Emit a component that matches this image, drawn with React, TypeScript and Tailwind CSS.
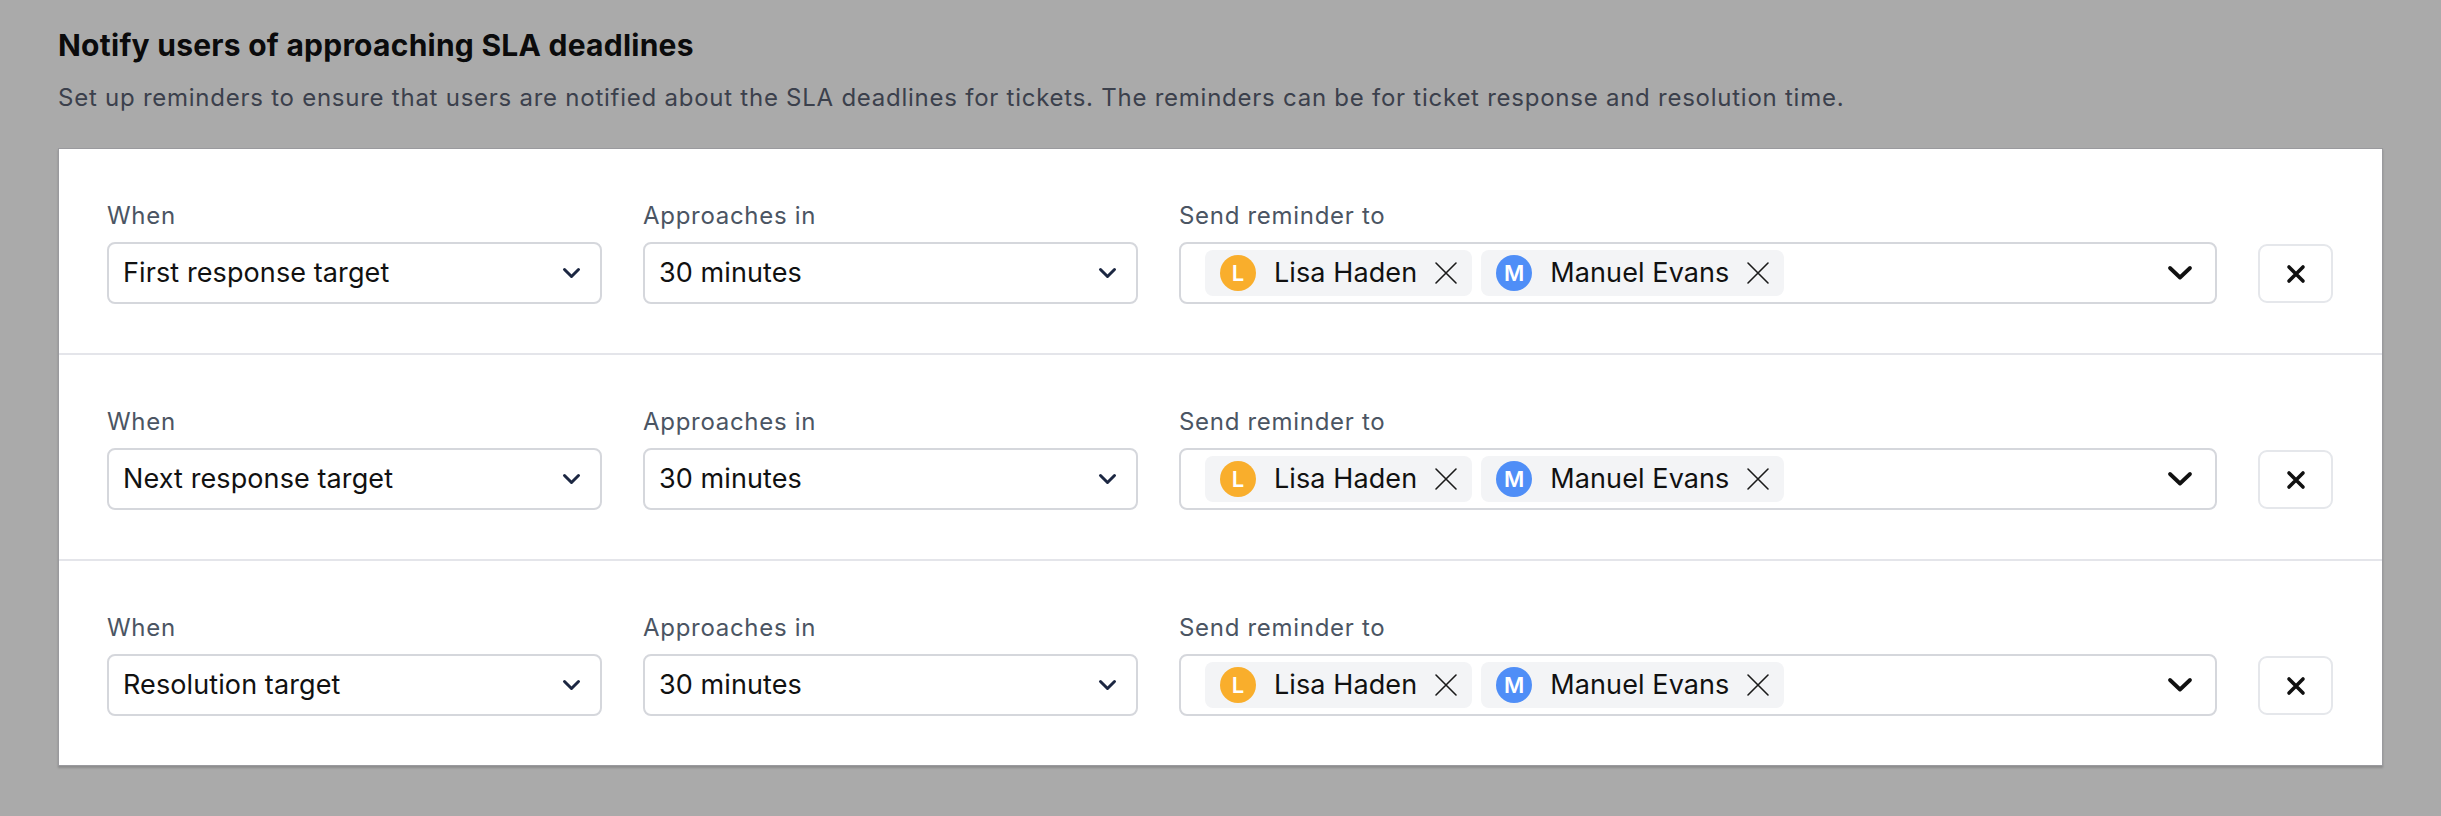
const rows = ['First response target', 'Next response target', 'Resolution target'];

const people = [
  { initial: 'L', name: 'Lisa Haden', color: 'bg-[#f9ae2c]' },
  { initial: 'M', name: 'Manuel Evans', color: 'bg-[#4f8ef7]' },
];

function SmallChevron() {
  return (
    <svg width="19" height="12" viewBox="0 0 19 12" fill="none">
      <path d="M2.5 2.5 9.5 9.5 16.5 2.5" stroke="#1c2742" strokeWidth="3" strokeLinecap="round" strokeLinejoin="round" />
    </svg>
  );
}

function BigChevron() {
  return (
    <svg width="26" height="16" viewBox="0 0 26 16" fill="none">
      <path d="M3 3 13 12.5 23 3" stroke="#111111" strokeWidth="3.8" strokeLinecap="round" strokeLinejoin="round" />
    </svg>
  );
}

function ThinX() {
  return (
    <svg width="24" height="24" viewBox="0 0 24 24" fill="none">
      <path d="M2 2 22 22M22 2 2 22" stroke="#1a1a1a" strokeWidth="1.6" strokeLinecap="round" />
    </svg>
  );
}

function BoldX() {
  return (
    <svg width="20" height="20" viewBox="0 0 20 20" fill="none">
      <path d="M3 3 17 17M17 3 3 17" stroke="#111111" strokeWidth="3.6" strokeLinecap="round" />
    </svg>
  );
}

function Field({ label, children }: { label: string; children: React.ReactNode }) {
  return (
    <div className="flex flex-col gap-[11px]">
      <span className="text-[24px] leading-[30px] tracking-[0.7px] text-[#4b5563]">{label}</span>
      {children}
    </div>
  );
}

function Select({ value }: { value: string }) {
  return (
    <div className="flex h-[62px] w-[495px] items-center justify-between rounded-[8px] border-2 border-[#d5d7dc] bg-white pl-[14px] pr-[19px]">
      <span className="text-[27px] tracking-[0.1px] text-[#111111]">{value}</span>
      <SmallChevron />
    </div>
  );
}

function ReminderRow({ when, last }: { when: string; last: boolean }) {
  return (
    <div className={`flex items-end gap-[41px] pl-[48px] pr-[49px] pt-[52px] pb-[49px] ${last ? '' : 'border-b-2 border-[#e4e5ea]'}`}>
      <Field label="When">
        <Select value={when} />
      </Field>
      <Field label="Approaches in">
        <Select value="30 minutes" />
      </Field>
      <div className="flex-1">
        <Field label="Send reminder to">
          <div className="flex h-[62px] items-center justify-between rounded-[8px] border-2 border-[#d5d7dc] bg-white pl-[24px] pr-[22px]">
            <div className="flex items-center gap-[9px]">
              {people.map((p) => (
                <div key={p.name} className="flex h-[46px] items-center rounded-[8px] bg-[#f3f4f6] pl-[15px] pr-[14px]">
                  <span className={`flex h-[36px] w-[36px] items-center justify-center rounded-full ${p.color} text-[22px] font-semibold text-white`}>
                    {p.initial}
                  </span>
                  <span className="ml-[18px] mr-[17px] text-[27px] tracking-[0.1px] text-[#111111]">{p.name}</span>
                  <ThinX />
                </div>
              ))}
            </div>
            <BigChevron />
          </div>
        </Field>
      </div>
      <button className="mb-[1px] flex h-[59px] w-[75px] items-center justify-center rounded-[9px] border-2 border-[#e5e7eb] bg-white">
        <BoldX />
      </button>
    </div>
  );
}

export default function App() {
  return (
    <div className="min-h-[816px] bg-[#aaaaaa] px-[58px] pt-[27px] pb-[40px] font-['Inter',sans-serif]">
      <h1 className="text-[30px] leading-[36px] tracking-[0.25px] font-bold text-[#0b0b0c]">Notify users of approaching SLA deadlines</h1>
      <p className="mt-[19px] text-[24px] leading-[32px] tracking-[0.75px] text-[#3b404c]">
        Set up reminders to ensure that users are notified about the SLA deadlines for tickets. The reminders can be for ticket response and resolution time.
      </p>
      <div className="mt-[34px] border border-[#9a9a9e] bg-white shadow-[0_2px_2px_rgba(0,0,0,0.18)]">
        {rows.map((r, i) => (
          <ReminderRow key={r} when={r} last={i === rows.length - 1} />
        ))}
      </div>
    </div>
  );
}
